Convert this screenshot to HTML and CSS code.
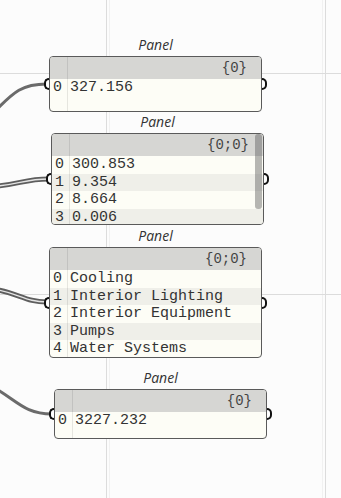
FILE: index.html
```html
<!DOCTYPE html>
<html>
<head>
<title>Panels</title>
<link rel="stylesheet" href="styles.css">
</head>
<body>

<div class="canvas">

	<div class="grid v1"></div>
	<div class="grid v1b"></div>
	<div class="grid v2"></div>
	<div class="grid v2b"></div>
	<div class="grid h1"></div>
	<div class="grid h2"></div>

	<svg class="wires" width="341" height="498" viewBox="0 0 341 498">
		<path class="wire" d="M -4 110 C 14 92, 22 84, 47 84" />
		<path class="wire list" d="M -2 186 C 20 184, 26 179, 49 179" />
		<path class="wire list-gap" d="M -2 186 C 20 184, 26 179, 49 179" />
		<path class="wire list" d="M -2 290 C 20 294, 26 302, 47 302" />
		<path class="wire list-gap" d="M -2 290 C 20 294, 26 302, 47 302" />
		<path class="wire" d="M -2 390 C 18 402, 26 414, 52 414" />
	</svg>

	<div class="node n1">
		<div class="title">Panel</div>
		<div class="panel">
			<span class="port in"></span>
			<span class="port out"></span>
			<div class="head">{0}</div>
			<div class="body">
				<div class="row"><span class="idx">0</span><span class="val">327.156</span></div>
			</div>
		</div>
	</div>

	<div class="node n2">
		<div class="title">Panel</div>
		<div class="panel">
			<span class="port in"></span>
			<span class="port out"></span>
			<span class="thumb"></span>
			<div class="head">{0;0}</div>
			<div class="body">
				<div class="row"><span class="idx">0</span><span class="val">300.853</span></div>
				<div class="row"><span class="idx">1</span><span class="val">9.354</span></div>
				<div class="row"><span class="idx">2</span><span class="val">8.664</span></div>
				<div class="row"><span class="idx">3</span><span class="val">0.006</span></div>
			</div>
		</div>
	</div>

	<div class="node n3">
		<div class="title">Panel</div>
		<div class="panel">
			<span class="port in"></span>
			<span class="port out"></span>
			<div class="head">{0;0}</div>
			<div class="body">
				<div class="row"><span class="idx">0</span><span class="val">Cooling</span></div>
				<div class="row"><span class="idx">1</span><span class="val">Interior Lighting</span></div>
				<div class="row"><span class="idx">2</span><span class="val">Interior Equipment</span></div>
				<div class="row"><span class="idx">3</span><span class="val">Pumps</span></div>
				<div class="row"><span class="idx">4</span><span class="val">Water Systems</span></div>
			</div>
		</div>
	</div>

	<div class="node n4">
		<div class="title">Panel</div>
		<div class="panel">
			<span class="port in"></span>
			<span class="port out"></span>
			<div class="head">{0}</div>
			<div class="body">
				<div class="row"><span class="idx">0</span><span class="val">3227.232</span></div>
			</div>
		</div>
	</div>

</div>

</body>
</html>
```

FILE: styles.css
```css
body {
	margin: 0;
	background-color: #fcfcfc;
}

.canvas {
	position: relative;
	width: 341px;
	height: 498px;
	overflow: hidden;
	background-color: #fcfcfc;
}

/* canvas grid */
.grid {
	position: absolute;
	background-color: #dcdcdc;
}

.v1, .v1b, .v2, .v2b {
	top: 0;
	bottom: 0;
	width: 1px;
}

.v1 { left: 106px; }
.v1b { left: 109px; background-color: #f1f1f1; }
.v2 { left: 325px; }
.v2b { left: 322px; background-color: #f1f1f1; }

.h1, .h2 {
	left: 0;
	right: 0;
	height: 1px;
}

.h1 { top: 73px; }
.h2 { top: 294px; }

/* wires */
.wires {
	position: absolute;
	left: 0;
	top: 0;
}

.wire {
	fill: none;
	stroke: #6b6b6b;
	stroke-width: 3;
}

.wire.list {
	stroke: #5e5e5e;
	stroke-width: 5;
}

.wire.list-gap {
	stroke: #e4e4e4;
	stroke-width: 1.4;
}

/* nodes */
.node {
	position: absolute;
	width: 213px;
	display: flex;
	flex-direction: column;
	z-index: 1;
}

.n1 { left: 49px; top: 34px; }
.n2 { left: 51px; top: 111px; }
.n3 { left: 49px; top: 225px; }
.n4 { left: 54px; top: 367px; }

.n1 .panel { height: 56px; }
.n2 .panel { height: 92px; }
.n3 .panel { height: 111px; }
.n4 .panel { height: 50px; }

.title {
	height: 22px;
	line-height: 22px;
	text-align: center;
	font-family: "Open Sans", "Noto Sans", sans-serif;
	font-style: italic;
	font-size: 14px;
	color: #333;
}

.panel {
	position: relative;
	box-sizing: border-box;
	display: flex;
	flex-direction: column;
	border: 1px solid #5a5a5a;
	border-radius: 4px;
	background-color: #fdfdf6;
	font-family: "Liberation Mono", "DejaVu Sans Mono", monospace;
	color: #333;
}

/* index column divider */
.panel::before {
	content: "";
	position: absolute;
	left: 17px;
	top: 0;
	bottom: 0;
	width: 1px;
	background-color: rgba(0, 0, 0, 0.09);
	z-index: 1;
}

.head {
	flex: none;
	height: 22px;
	line-height: 22px;
	padding-right: 14px;
	text-align: right;
	font-size: 14px;
	color: #444;
	background-color: #d6d6d3;
	border-radius: 3px 3px 0 0;
}

.body {
	flex: 1;
	overflow: hidden;
	border-radius: 0 0 3px 3px;
}

.row {
	display: flex;
	height: 17.5px;
	line-height: 17.5px;
	font-size: 15px;
	white-space: nowrap;
}

.row:nth-child(even) {
	background-color: #efefe9;
}

.idx {
	width: 15px;
	padding-left: 3px;
}

.val {
	padding-left: 2px;
}

/* scrollbar thumb */
.thumb {
	position: absolute;
	right: 1px;
	top: 0;
	width: 7px;
	height: 75px;
	border-radius: 3px;
	background-color: rgba(95, 95, 95, 0.45);
	z-index: 2;
}

/* parameter grips */
.port {
	position: absolute;
	top: 50%;
	width: 3px;
	height: 8px;
	margin-top: -6px;
	border: 2px solid #111;
	background-color: #fff;
	z-index: 2;
}

.port.in {
	left: -6px;
	border-right: 0;
	border-radius: 6px 0 0 6px;
}

.port.out {
	right: -6px;
	border-left: 0;
	border-radius: 0 6px 6px 0;
}
```
